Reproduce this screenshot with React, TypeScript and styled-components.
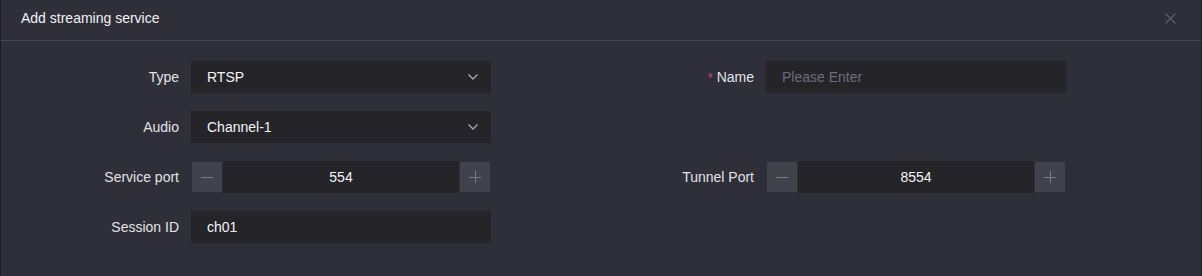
import React from "react";
import styled, { createGlobalStyle } from "styled-components";

const Global = createGlobalStyle`
  html, body {
    margin: 0;
    padding: 0;
    background: #2f2f39;
  }
  * {
    box-sizing: border-box;
  }
`;

const Dialog = styled.div`
  width: 1202px;
  height: 276px;
  background: #2f2f39;
  border-left: 1px solid #1d1d23;
  border-right: 1px solid #1d1d23;
  font-family: "Liberation Sans", Arial, sans-serif;
  font-size: 14px;
  color: #e6e6ea;
`;

const Header = styled.div`
  height: 41px;
  display: flex;
  align-items: center;
  justify-content: space-between;
  padding: 0 20px 4px 20px;
  border-bottom: 1px solid #46464f;
`;

const Title = styled.span`
  color: #f2f2f4;
  font-size: 14px;
`;

const CloseButton = styled.button`
  width: 14px;
  height: 14px;
  padding: 0;
  margin-right: 4px;
  border: none;
  background: transparent;
  display: flex;
  align-items: center;
  justify-content: center;
  cursor: pointer;
`;

const Form = styled.div`
  display: grid;
  grid-template-columns: 575px 575px;
  row-gap: 18px;
  padding-top: 20px;
`;

const Field = styled.div`
  display: flex;
  align-items: center;
  height: 32px;
`;

const Label = styled.label`
  width: 190px;
  padding-right: 12px;
  text-align: right;
  color: #e2e2e6;
  white-space: nowrap;
`;

const Star = styled.span`
  color: #c9506a;
  margin-right: 4px;
  font-size: 12px;
`;

const Box = styled.div`
  width: 300px;
  height: 32px;
  background: #242429;
  display: flex;
  align-items: center;
`;

const SelectBox = styled(Box)`
  justify-content: space-between;
  padding: 0 12px 0 16px;
  color: #f4f4f6;
`;

const TextInput = styled.input`
  width: 300px;
  height: 32px;
  background: #242429;
  border: none;
  outline: none;
  padding: 0 16px;
  font-family: inherit;
  font-size: 14px;
  color: #f4f4f6;
  &::placeholder {
    color: #6d6d77;
  }
`;

const StepButton = styled.button`
  width: 32px;
  height: 32px;
  padding: 0;
  border: 1px solid #2f2f39;
  background: #42424d;
  display: flex;
  align-items: center;
  justify-content: center;
`;

const StepValue = styled.div`
  flex: 1;
  text-align: center;
  color: #f4f4f6;
`;

const Chevron = () => (
  <svg width="12" height="8" viewBox="0 0 12 8">
    <path d="M1.5 1.5 L6 6 L10.5 1.5" fill="none" stroke="#a7a7b0" strokeWidth="1.4" />
  </svg>
);

const Minus = () => (
  <svg width="12" height="12" viewBox="0 0 12 12">
    <path d="M0 6.5 H12" stroke="#7a7a86" strokeWidth="1" />
  </svg>
);

const Plus = () => (
  <svg width="12" height="12" viewBox="0 0 12 12">
    <path d="M0 6.5 H12 M6.5 0 V12" stroke="#7a7a86" strokeWidth="1" />
  </svg>
);

const Select = ({ value }: { value: string }) => (
  <SelectBox>
    <span>{value}</span>
    <Chevron />
  </SelectBox>
);

const Stepper = ({ value }: { value: number }) => (
  <Box>
    <StepButton>
      <Minus />
    </StepButton>
    <StepValue>{value}</StepValue>
    <StepButton>
      <Plus />
    </StepButton>
  </Box>
);

export default function App() {
  return (
    <>
      <Global />
      <Dialog>
        <Header>
          <Title>Add streaming service</Title>
          <CloseButton>
            <svg width="11" height="11" viewBox="0 0 11 11">
              <path d="M0.5 0.5 L10.5 10.5 M10.5 0.5 L0.5 10.5" stroke="#5d5e6b" strokeWidth="1.2" />
            </svg>
          </CloseButton>
        </Header>
        <Form>
          <Field>
            <Label>Type</Label>
            <Select value="RTSP" />
          </Field>
          <Field>
            <Label>
              <Star>*</Star>Name
            </Label>
            <TextInput placeholder="Please Enter" />
          </Field>
          <Field>
            <Label>Audio</Label>
            <Select value="Channel-1" />
          </Field>
          <div />
          <Field>
            <Label>Service port</Label>
            <Stepper value={554} />
          </Field>
          <Field>
            <Label>Tunnel Port</Label>
            <Stepper value={8554} />
          </Field>
          <Field>
            <Label>Session ID</Label>
            <TextInput defaultValue="ch01" />
          </Field>
        </Form>
      </Dialog>
    </>
  );
}
